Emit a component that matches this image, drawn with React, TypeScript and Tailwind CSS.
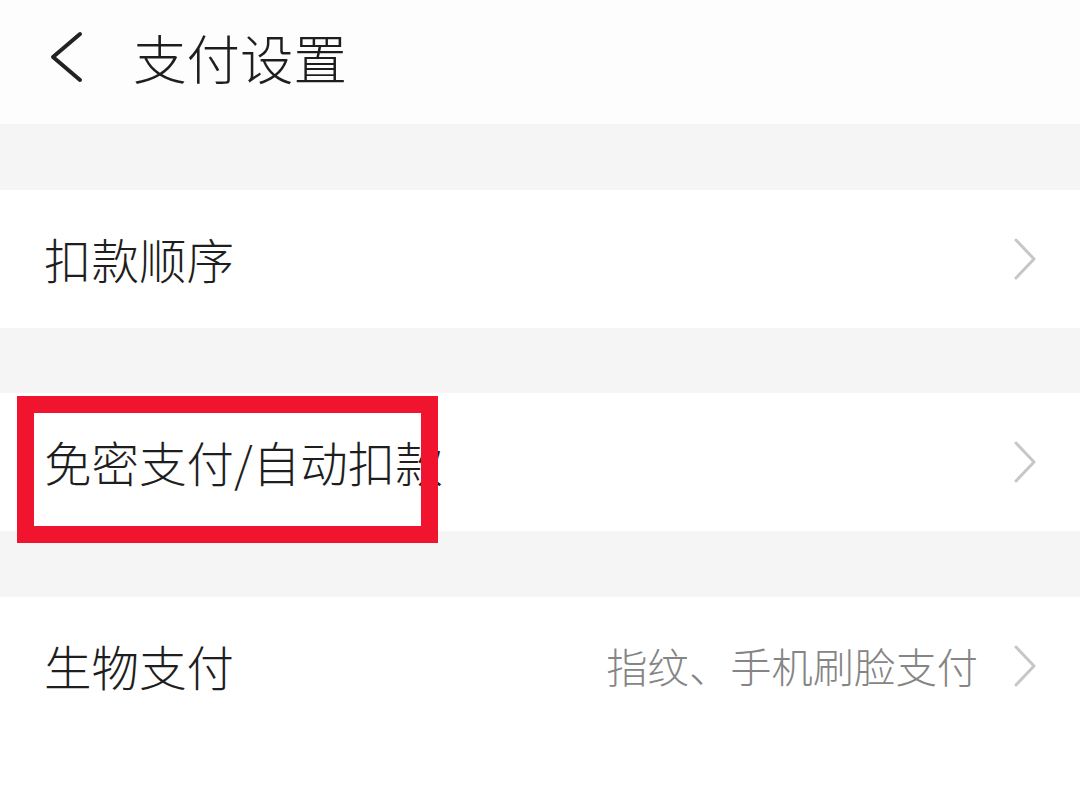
import React from 'react'

const font = { fontFamily: '"Noto Sans CJK SC", "Noto Sans", sans-serif' }

function Chevron() {
  return (
    <svg width="26" height="44" viewBox="0 0 26 44" className="shrink-0">
      <path d="M4 3 L22 22 L4 41" fill="none" stroke="#c7c7c7" strokeWidth="3" strokeLinecap="round" strokeLinejoin="round" />
    </svg>
  )
}

function Row({ label, value }: { label: string; value?: string }) {
  return (
    <div className="flex h-[138px] items-center bg-white pl-[44px] pr-[42px]">
      <span className="flex-1 whitespace-nowrap text-[47.5px] font-light leading-none text-[#1e1e1e]">{label}</span>
      {value && <span className="mr-[34px] text-[41.3px] font-light leading-none text-[#858585]">{value}</span>}
      <Chevron />
    </div>
  )
}

export default function App() {
  return (
    <div className="h-[810px] w-[1080px] overflow-hidden bg-[#f5f5f5]" style={font}>
      {/* Header */}
      <div className="flex h-[124px] items-center bg-[#fdfdfd] pl-[48px]">
        <svg width="36" height="52" viewBox="0 0 36 52" className="mb-[10px]">
          <path d="M32 3 L5 26 L32 49" fill="none" stroke="#222" strokeWidth="4" strokeLinecap="round" strokeLinejoin="round" />
        </svg>
        <span className="mb-[10px] ml-[49px] text-[53.5px] font-light leading-none text-[#1e1e1e]">支付设置</span>
      </div>

      <div className="h-[66px]" />
      <Row label="扣款顺序" />

      <div className="h-[65px]" />
      <div className="relative">
        <Row label="免密支付/自动扣款" />
        <div className="absolute left-[17px] top-[3px] h-[147px] w-[421px] border-[17px] border-[#f0142e]" />
      </div>

      <div className="h-[66px]" />
      <div className="h-[213px] bg-white">
        <Row label="生物支付" value="指纹、手机刷脸支付" />
      </div>
    </div>
  )
}
